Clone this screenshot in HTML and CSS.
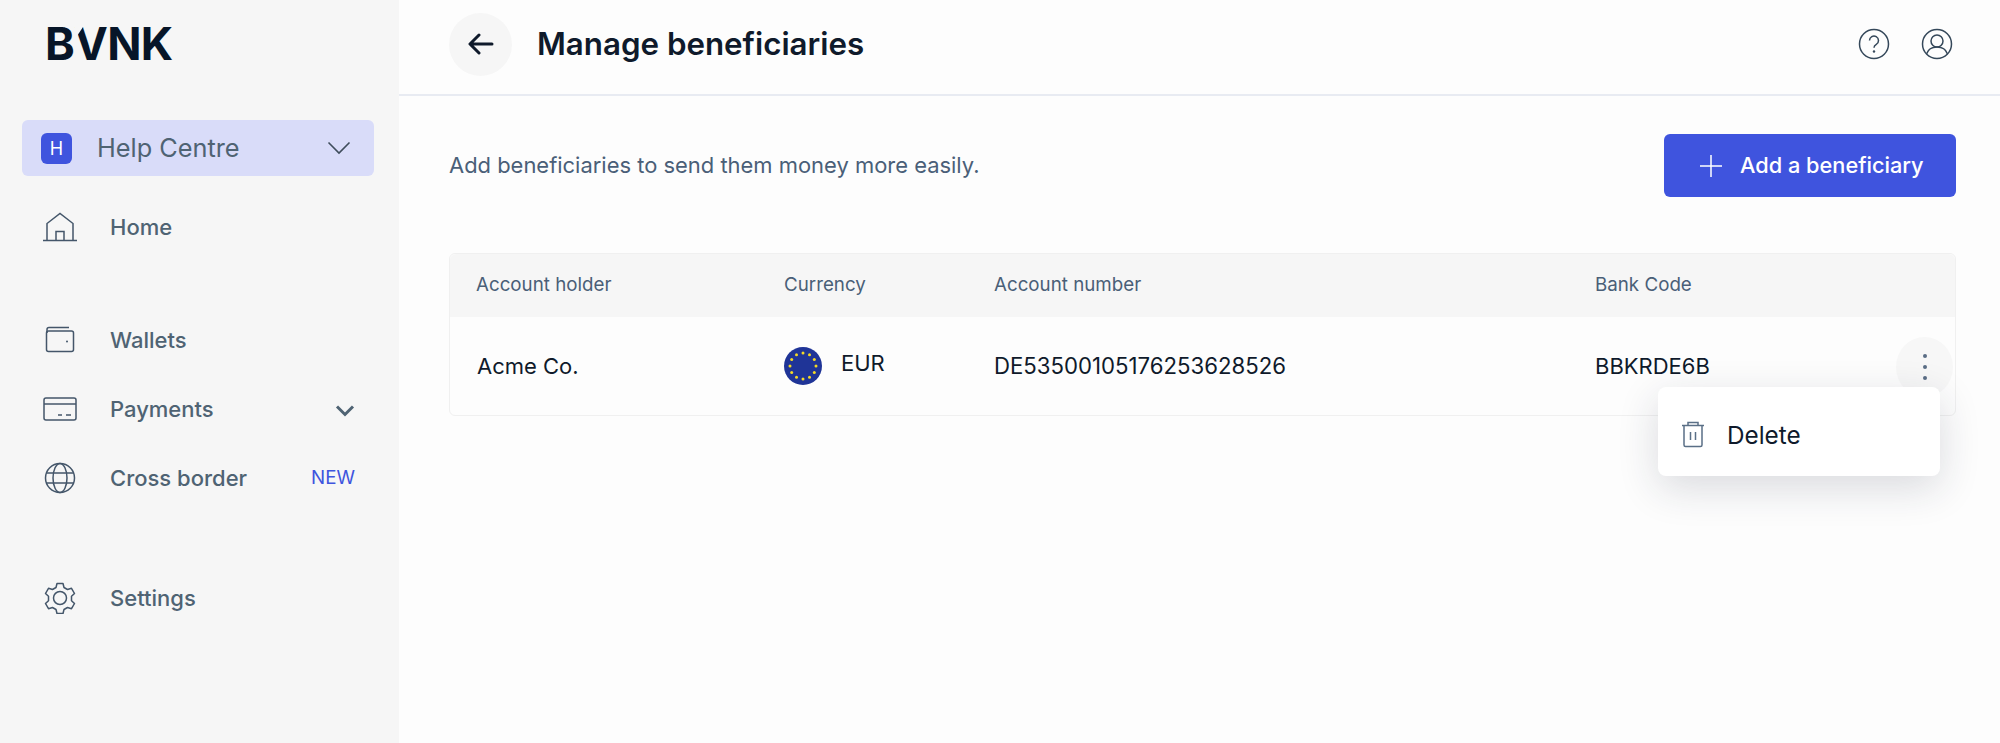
FILE: index.html
```html
<!DOCTYPE html>
<html lang="en">
<head>
<meta charset="utf-8">
<title>Manage beneficiaries</title>
<link rel="stylesheet" href="styles.css">
</head>
<body>
<div class="app">
  <aside class="sidebar">
    <div class="logo">BVNK</div>
    <div class="account">
      <span class="account-badge">H</span>
      <span class="account-name">Help Centre</span>
      <svg class="account-chev" width="24" height="14" viewBox="0 0 24 14" fill="none"><path d="M1.5 1.5 12 12 22.5 1.5" stroke="#3f4d5c" stroke-width="1.6"/></svg>
    </div>
    <nav class="nav">
      <div class="nav-group nav-group-home">
        <a class="nav-item"><span class="nav-icon"><svg width="36" height="30" viewBox="0 0 36 30" fill="none" stroke="#44566a" stroke-width="1.5"><path d="M1 28.5h34"/><path d="M5 28.5V11.5L18 1.5l13 10v17"/><path d="M14 28.5v-9h8v9"/></svg></span><span class="nav-label">Home</span></a>
      </div>
      <div class="nav-group nav-group-main">
        <a class="nav-item"><span class="nav-icon"><svg width="30" height="28" viewBox="0 0 30 28" fill="none" stroke="#44566a" stroke-width="1.5"><path d="M2 7V3.5Q2 1.5 4 1.5h20"/><rect x="1.5" y="5" width="27" height="20.5" rx="2"/><circle cx="22" cy="15.5" r="1" fill="#44566a" stroke="none"/></svg></span><span class="nav-label">Wallets</span></a>
        <a class="nav-item"><span class="nav-icon"><svg width="34" height="24" viewBox="0 0 34 24" fill="none" stroke="#44566a" stroke-width="1.5"><rect x="1" y="1" width="32" height="22" rx="2"/><path d="M1 7h32"/><path d="M15 18h4M23 18h5"/></svg></span><span class="nav-label">Payments</span><svg class="nav-chev" width="20" height="13" viewBox="0 0 20 13" fill="none"><path d="M2 2.500 10 10.500 18 2.500" stroke="#4f6373" stroke-width="3"/></svg></a>
        <a class="nav-item"><span class="nav-icon"><svg width="32" height="32" viewBox="0 0 32 32" fill="none" stroke="#44566a" stroke-width="1.5"><circle cx="16" cy="16" r="14.5"/><ellipse cx="16" cy="16" rx="7" ry="14.5"/><path d="M2.5 11h27M2.5 21h27"/></svg></span><span class="nav-label">Cross border</span><span class="nav-new">NEW</span></a>
      </div>
      <div class="nav-group nav-group-settings">
        <a class="nav-item"><span class="nav-icon"><svg width="32" height="32" viewBox="0 0 32 32" fill="none" stroke="#44566a" stroke-width="1.5" stroke-linejoin="round"><circle cx="16" cy="16" r="6.5"/><path d="M13 1.500h6l1 4 3.500 2 4-1.200 3 5.200-3 2.800v4.400l3 2.800-3 5.200-4-1.200-3.500 2-1 4h-6l-1-4-3.500-2-4 1.200-3-5.200 3-2.800v-4.400l-3-2.800 3-5.200 4 1.200 3.500-2z"/></svg></span><span class="nav-label">Settings</span></a>
      </div>
    </nav>
  </aside>
  <main class="main">
    <header class="topbar">
      <button class="back" aria-label="Back"><svg width="26" height="22" viewBox="0 0 26 22" fill="none" stroke="#0f1a2b" stroke-width="3" stroke-linecap="round" stroke-linejoin="round"><path d="M24 11H2.500M11 2 2 11l9 9"/></svg></button>
      <h1 class="title">Manage beneficiaries</h1>
      <div class="top-icons">
        <svg width="32" height="32" viewBox="0 0 32 32" fill="none" stroke="#35485a" stroke-width="1.500"><circle cx="16" cy="16" r="14.500"/><path d="M11.500 12.500a4.500 4.500 0 1 1 6.800 3.900c-1.500.9-2.300 1.700-2.300 3.300"/><circle cx="16" cy="23.500" r="1.200" fill="#35485a" stroke="none"/></svg>
        <svg width="32" height="32" viewBox="0 0 32 32" fill="none" stroke="#35485a" stroke-width="1.500"><circle cx="16" cy="16" r="14.500"/><circle cx="16" cy="13" r="6"/><path d="M5.500 26c1.500-4.500 5.500-7 10.500-7s9 2.500 10.500 7"/></svg>
      </div>
    </header>
    <section class="content">
      <div class="intro">
        <p class="intro-text">Add beneficiaries to send them money more easily.</p>
        <button class="add-btn"><svg width="24" height="24" viewBox="0 0 24 24" fill="none" stroke="#fff" stroke-width="1.500"><path d="M12 1v22M1 12h22"/></svg><span class="add-label">Add a beneficiary</span></button>
      </div>
      <div class="table">
        <div class="row row-head">
          <span>Account holder</span><span>Currency</span><span>Account number</span><span>Bank Code</span>
        </div>
        <div class="row row-body">
          <span class="holder">Acme Co.</span>
          <span class="currency">
            <svg width="38" height="38" viewBox="0 0 38 38"><circle cx="19" cy="19" r="19" fill="#1f3497"/><g fill="#f5d925"><circle cx="19" cy="6" r="1.500"/><circle cx="25.500" cy="7.700" r="1.500"/><circle cx="30.300" cy="12.500" r="1.500"/><circle cx="32" cy="19" r="1.500"/><circle cx="30.300" cy="25.500" r="1.500"/><circle cx="25.500" cy="30.300" r="1.500"/><circle cx="19" cy="32" r="1.500"/><circle cx="12.500" cy="30.300" r="1.500"/><circle cx="7.700" cy="25.500" r="1.500"/><circle cx="6" cy="19" r="1.500"/><circle cx="7.700" cy="12.500" r="1.500"/><circle cx="12.500" cy="7.700" r="1.500"/></g></svg>
            <span class="cur-code">EUR</span>
          </span>
          <span class="acct-num">DE53500105176253628526</span>
          <span>BBKRDE6B</span>
        </div>
        <button class="kebab" aria-label="More"><i></i><i></i><i></i></button>
        <div class="menu">
          <svg width="24" height="27" viewBox="0 0 24 27" fill="none" stroke="#5a6f86" stroke-width="1.500"><path d="M1 4.500h22"/><path d="M7 4.500V1.500h10v3"/><path d="M3 4.500V24q0 1.500 1.500 1.500h15Q21 25.500 21 24V4.500"/><path d="M9.500 11v8M14.500 11v8"/></svg>
          <span class="menu-label">Delete</span>
        </div>
      </div>
    </section>
  </main>
</div>
</body>
</html>
```
FILE: styles.css
```css
* { box-sizing: border-box; }
html, body { margin: 0; height: 100%; }
body { font-family: Inter, "Liberation Sans", sans-serif; color: #0f1a2b; background: #fdfdfd; overflow: hidden; }
.app { display: flex; height: 743px; }

.sidebar { width: 399px; flex: none; background: #f6f6f6; padding: 0 22px; }
.logo { position: relative; height: 120px; padding: 17px 0 0 23px; font-size: 45px; line-height: 54px; font-weight: 700; letter-spacing: -0.6px; color: #071528; }
.logo::after { content: ""; position: absolute; left: 53px; top: 27px; width: 8px; height: 12px; background: #f6f6f6; clip-path: polygon(0 0, 100% 0, 0 100%); }
.account { display: flex; align-items: center; width: 352px; height: 56px; padding: 0 23px 0 19px; background: #d9dcf9; border-radius: 6px; }
.account-badge { width: 31px; height: 31px; border-radius: 6px; background: #3f54de; color: #fff; font-size: 18px; font-weight: 400; display: flex; align-items: center; justify-content: center; }
.account-name { flex: 1; margin-left: 25px; margin-top: -1px; font-size: 25.300px; color: #4f6373; }
.nav-group-home { margin-top: 16px; }
.nav-group-main { margin-top: 44px; }
.nav-group-settings { margin-top: 51px; }
.nav-item { display: flex; align-items: center; height: 69px; padding-right: 22px; }
.nav-icon { width: 76px; margin-right: 12px; flex: none; display: flex; align-items: center; justify-content: center; }
.nav-label { flex: 1; font-size: 22px; font-weight: 500; color: #4f6373; }
.nav-new { font-size: 18.800px; color: #3f54de; }
.nav-chev { margin-top: 4px; }

.main { flex: 1; display: flex; flex-direction: column; min-width: 0; }
.topbar { height: 96px; flex: none; display: flex; align-items: center; padding: 0 47px 6px 50px; border-bottom: 2px solid #e8ebf2; }
.back { width: 63px; height: 63px; border: 0; padding: 0; border-radius: 50%; background: #f6f6f6; display: flex; align-items: center; justify-content: center; }
.title { flex: 1; margin: 0 0 0 25px; font-size: 31.300px; font-weight: 600; color: #0f1a2b; }
.top-icons { display: flex; gap: 31px; }

.content { padding: 38px 44px 0 50px; }
.intro { display: flex; align-items: center; justify-content: space-between; height: 63px; }
.intro-text { margin: -1px 0 0; font-size: 21.950px; color: #4a5f78; }
.add-btn { width: 292px; height: 63px; border: 0; border-radius: 6px; background: #3f54de; color: #fff; font-family: inherit; font-size: 21.750px; font-weight: 550; display: flex; align-items: center; gap: 17px; padding: 0 0 0 35px; }
.add-label { margin-top: -2px; }

.table { position: relative; margin-top: 56px; border: 1px solid #f0f0f0; border-radius: 6px; }
.row { display: grid; grid-template-columns: 308px 210px 601px 1fr; align-items: center; padding-left: 26px; }
.row-head { height: 63px; background: #f6f6f6; font-size: 18.750px; color: #4a5f78; border-radius: 6px 6px 0 0; padding-bottom: 2px; }
.row-body { height: 98px; font-size: 22px; line-height: 26px; color: #0f1a2b; }
.holder { padding-left: 1px; }
.currency { display: flex; align-items: center; gap: 19px; }
.cur-code { margin-top: -6px; }
.acct-num { font-size: 22.200px; }
.kebab { position: absolute; top: 83px; right: 2px; width: 57px; height: 60px; border: 0; padding: 0; border-radius: 50%; background: #f7f7f7; display: flex; flex-direction: column; align-items: center; justify-content: center; gap: 7px; }
.kebab i { width: 4px; height: 4px; border-radius: 50%; background: #5a6d85; }
.menu { position: absolute; top: 133px; right: 15px; width: 282px; height: 89px; padding: 6px 0 0 23px; display: flex; align-items: center; gap: 22px; background: #fff; border-radius: 8px; box-shadow: 0 12px 40px rgba(30, 40, 60, 0.16); font-size: 24.300px; color: #0f1a2b; }
.menu-label { margin-top: 1px; }
```
